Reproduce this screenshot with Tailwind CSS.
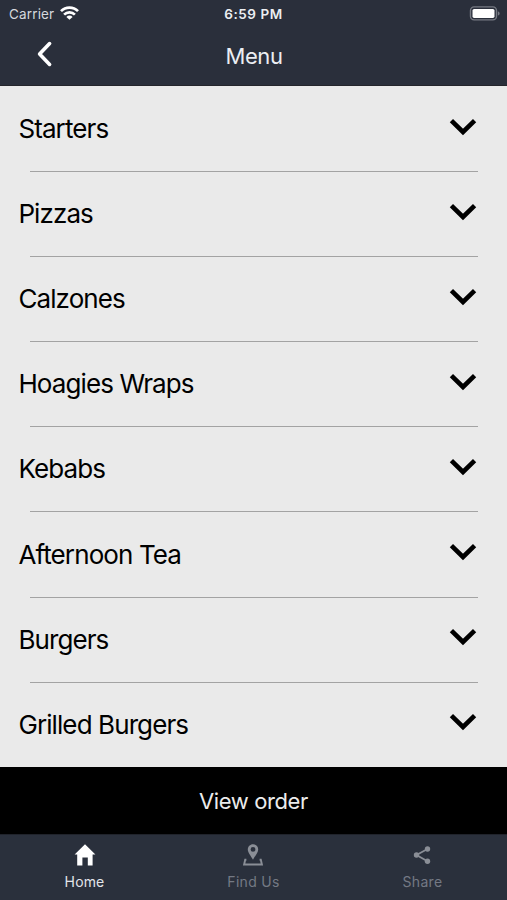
<!DOCTYPE html>
<html lang="en">

<head>
  <meta charset="UTF-8" />
  <title>Menu</title>
  <meta name="viewport" content="width=device-width, initial-scale=1.0" />
  <script src="https://cdn.jsdelivr.net/npm/@tailwindcss/browser@4"></script>
</head>

<body class="h-[900px] overflow-hidden flex flex-col bg-[#eaeaea] font-['Inter','Liberation_Sans',sans-serif]">
  <header class="h-[86px] shrink-0 bg-[#2a2f3b] text-[#eceef2] border-b border-[#24252b]">
    <!-- Status bar -->
    <div class="h-7 grid grid-cols-3 items-center pl-[9px] pr-[7px]">
      <div class="flex items-center gap-[6px]">
        <span class="text-[13.5px] leading-none tracking-[0.15px] text-[#d5d8dd] pt-px">Carrier</span>
        <svg class="w-[19px] h-[14px] mb-[2px]" viewBox="0 0 19 14" fill="none" stroke="#fff" stroke-width="2.7">
          <path d="M1 5.1a12 12 0 0 1 17 0" />
          <path d="M4.1 8.6a7.6 7.6 0 0 1 10.8 0" />
          <path d="M9.5 13.8 6.4 10.9a4.3 4.3 0 0 1 6.2 0Z" fill="#fff" stroke="none" />
        </svg>
      </div>
      <span class="text-[13.5px] leading-none font-semibold text-center tracking-[0.55px] pt-px -ml-[2px]">6:59 PM</span>
      <svg class="w-[31px] h-[15px] mb-px justify-self-end" viewBox="0 0 31 15">
        <rect x="1.5" y="0.9" width="26" height="13" rx="3.6" fill="none" stroke="#767a83" stroke-width="1.4" />
        <rect x="3.5" y="2.9" width="22" height="9" rx="1.6" fill="#fff" />
        <path d="M28.9 5.2c2.3.8 2.3 3.6 0 4.4Z" fill="#767a83" />
      </svg>
    </div>
    <div class="h-[57px] grid grid-cols-3 items-center">
      <button class="w-[18px] h-[28px] ml-[36px] mb-[6px]">
        <svg class="w-[18px] h-[28px]" viewBox="0 0 18 28" fill="none" stroke="#fff" stroke-width="3.6" stroke-linecap="round" stroke-linejoin="round">
          <path d="M13.6 3.6 3.6 14l10 10.4" />
        </svg>
      </button>
      <h1 class="text-[22px] leading-none text-center tracking-[-0.4px] pl-px pb-[1px]">Menu</h1>
    </div>
  </header>

  <main id="menu" class="h-[681px] shrink-0 flex flex-col"></main>

  <button class="h-[67px] shrink-0 bg-black text-[#ececec] text-[22px] leading-none tracking-[-0.4px]">View order</button>

  <nav class="h-[66px] shrink-0 bg-[#2a303c] border-t border-[#20232b] grid grid-cols-3 text-[14px] leading-none text-[#747984]">
    <a href="#" class="flex flex-col items-center pt-[8px] text-[#e2e5ea]">
      <svg class="w-6 h-6" viewBox="0 0 24 24" fill="#fff">
        <path d="M12 1.2 22.4 11.6H19.6V22.4H14.8V14.4H9.4V22.4H4.2V11.6H1.6Z" />
      </svg>
      <span class="mt-[8px] tracking-[0.15px]">Home</span>
    </a>
    <a href="#" class="flex flex-col items-center pt-[8px]">
      <svg class="w-6 h-6 mr-px" viewBox="0 0 24 24">
        <path fill="#8a8e96" fill-rule="evenodd" d="M12 1.2c3 0 5.2 2.3 5.2 5.2 0 3-3 6.2-5.2 10.4C9.8 12.6 6.8 9.4 6.8 6.4c0-2.9 2.2-5.2 5.2-5.2ZM12 4a2.4 2.4 0 1 0 0 4.8 2.4 2.4 0 0 0 0-4.8Z" />
        <path fill="none" stroke="#8a8e96" stroke-width="1.9" d="M5.4 16.8H4.2L3.1 21.5H20.9L19.8 16.8H18.6" />
      </svg>
      <span class="mt-[8px] tracking-[0.3px]">Find Us</span>
    </a>
    <a href="#" class="flex flex-col items-center pt-[8px]">
      <svg class="w-6 h-6 mr-px" viewBox="0 0 24 24" fill="#8a8e96">
        <path d="M17.5 6 6.5 12l11 6.3" fill="none" stroke="#8a8e96" stroke-width="1.8" />
        <circle cx="17.5" cy="6" r="2.7" />
        <circle cx="6.5" cy="12" r="2.7" />
        <circle cx="17.5" cy="18.3" r="2.7" />
      </svg>
      <span class="mt-[8px] tracking-[0.3px]">Share</span>
    </a>
  </nav>

  <script>
    const categories = ['Starters', 'Pizzas', 'Calzones', 'Hoagies Wraps', 'Kebabs', 'Afternoon Tea', 'Burgers', 'Grilled Burgers'];

    document.getElementById('menu').innerHTML = categories.map((name, i) => `
      <section class="h-[85.1px] shrink-0 flex flex-col pt-px">
        <button class="flex-1 flex items-center justify-between pl-[18.4px] pr-[30px] text-black">
          <span class="text-[26px] leading-none tracking-[-0.9px]">${name}</span>
          <svg class="w-[28px] h-[18px] mb-[5px]" viewBox="0 0 28 18" fill="none" stroke="#000" stroke-width="4.6">
            <path d="M2.4 2.6 14 14l11.6-11.4" />
          </svg>
        </button>
        ${i < categories.length - 1 ? '<div class="h-px -mb-px ml-[30px] mr-[29px] bg-[#a3a3a3]"></div>' : ''}
      </section>`).join('');
  </script>
</body>

</html>
